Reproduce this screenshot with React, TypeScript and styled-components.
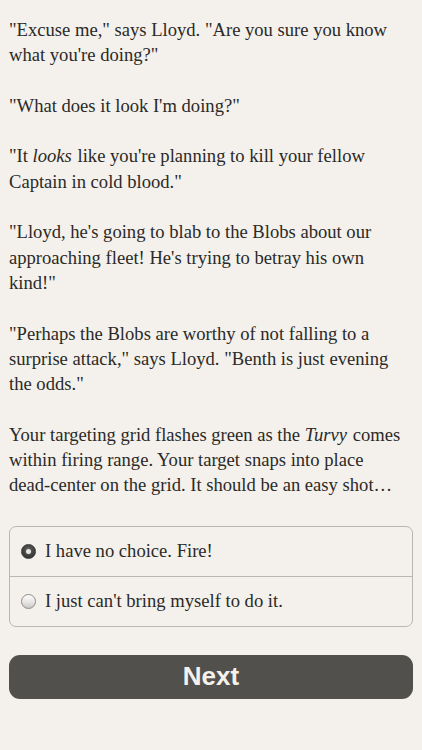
import styled, { createGlobalStyle } from "styled-components";

const GlobalStyle = createGlobalStyle`
  html, body {
    margin: 0;
    padding: 0;
    background: #f4f1ec;
  }
`;

const Page = styled.div`
  min-height: 750px;
  background: #f4f1ec;
  padding: 17px 9px 0;
  box-sizing: border-box;
  font-family: "Liberation Serif", "DejaVu Serif", serif;
  color: #2b2a28;
`;

const Story = styled.div`
  font-size: 18.6px;
  line-height: 25.3px;
`;

const Para = styled.p`
  margin: 0 0 25.3px;
  &:last-child {
    margin-bottom: 0;
  }
`;

const Em = styled.i`
  padding-right: 1px;
`;

const NoWrap = styled.span`
  white-space: nowrap;
`;

const Choices = styled.div`
  margin-top: 28px;
  border: 1px solid #bab6b0;
  border-radius: 7px;
  overflow: hidden;
`;

const Choice = styled.label<{ $first?: boolean }>`
  display: flex;
  align-items: center;
  gap: 9px;
  height: 49px;
  padding-left: 11px;
  font-size: 18.6px;
  border-top: ${(p) => (p.$first ? "none" : "1px solid #bab6b0")};
  cursor: pointer;
`;

const Radio = styled.span<{ $checked?: boolean }>`
  width: 15px;
  height: 15px;
  border-radius: 50%;
  box-sizing: border-box;
  flex-shrink: 0;
  position: relative;
  border: 1px solid ${(p) => (p.$checked ? "#3a3a3a" : "#8e8c88")};
  background: ${(p) =>
    p.$checked
      ? "radial-gradient(circle at 50% 40%, #6a6a6a 0%, #3c3c3c 60%, #2a2a2a 100%)"
      : "linear-gradient(#fdfdfd 0%, #e4e3e1 60%, #c9c8c5 100%)"};
  &::after {
    content: "";
    display: ${(p) => (p.$checked ? "block" : "none")};
    position: absolute;
    left: 50%;
    top: 50%;
    width: 5px;
    height: 5px;
    margin: -2.5px 0 0 -2.5px;
    border-radius: 50%;
    background: #e8e6e2;
  }
`;

const NextButton = styled.button`
  display: block;
  width: 100%;
  height: 44px;
  margin-top: 28px;
  border: none;
  border-radius: 11px;
  background: #52504d;
  color: #f4f1ec;
  font-family: "Liberation Sans", Arial, sans-serif;
  font-weight: bold;
  font-size: 26px;
  cursor: pointer;
`;

export default function App() {
  return (
    <>
      <GlobalStyle />
      <Page>
        <Story>
          <Para>"Excuse me," says Lloyd. "Are you sure you know what you're doing?"</Para>
          <Para>"What does it look I'm doing?"</Para>
          <Para>
            "It <Em>looks</Em> like you're planning to kill your fellow Captain in cold blood."
          </Para>
          <Para>
            "Lloyd, he's going to blab to the Blobs about our approaching fleet! He's trying to
            betray his own kind!"
          </Para>
          <Para>
            "Perhaps the Blobs are worthy of not falling to a surprise attack," says Lloyd. "Benth
            is just evening the odds."
          </Para>
          <Para>
            Your targeting grid flashes green as the <Em>Turvy</Em> comes within firing range.
            Your target snaps into place <NoWrap>dead-center</NoWrap> on the grid. It should be an
            easy shot…
          </Para>
        </Story>
        <Choices>
          <Choice $first>
            <Radio $checked />
            I have no choice. Fire!
          </Choice>
          <Choice>
            <Radio />
            I just can't bring myself to do it.
          </Choice>
        </Choices>
        <NextButton>Next</NextButton>
      </Page>
    </>
  );
}
